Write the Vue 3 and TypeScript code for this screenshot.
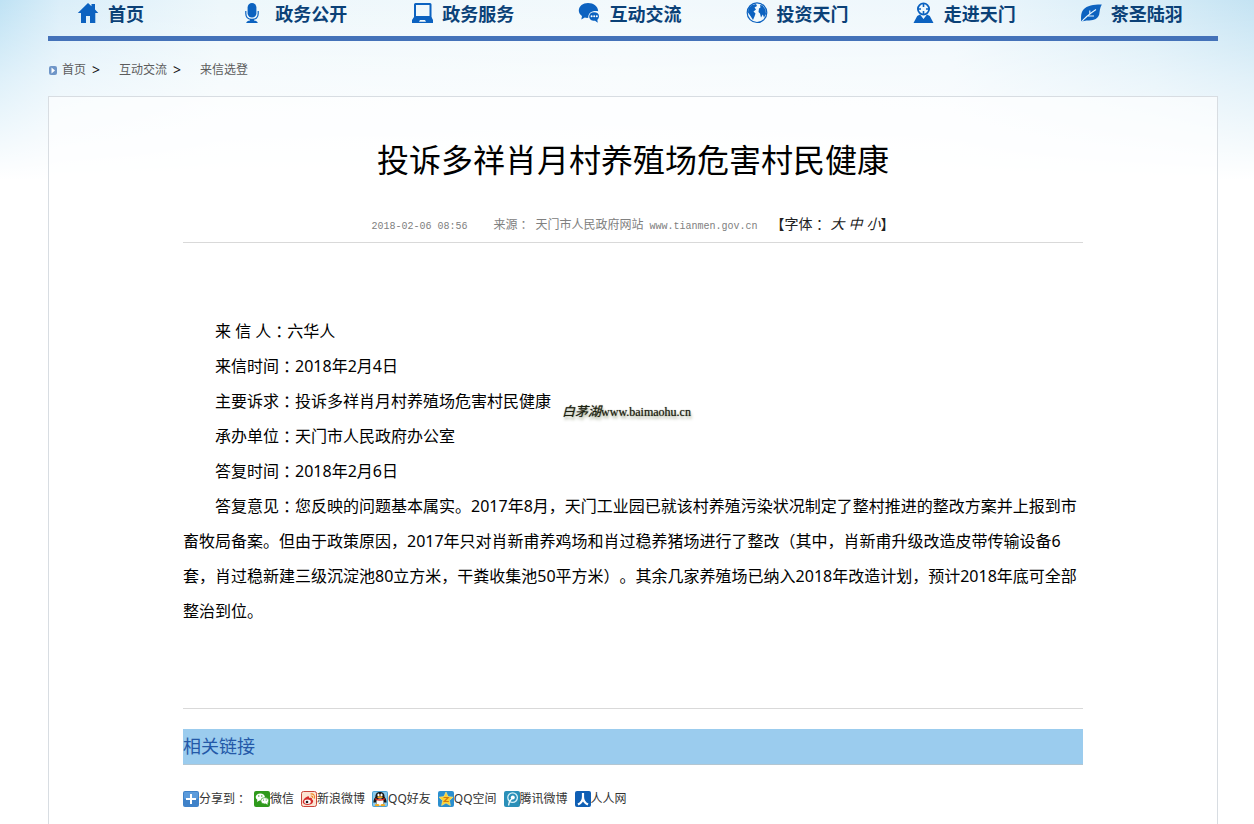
<script setup lang="ts">
interface NavItem {
  label: string
  icon: string
}

interface Field {
  label: string
  value: string
  stamp?: boolean
}

const navItems: NavItem[] = [
  { label: '首页', icon: 'home' },
  { label: '政务公开', icon: 'mic' },
  { label: '政务服务', icon: 'laptop' },
  { label: '互动交流', icon: 'chat' },
  { label: '投资天门', icon: 'globe' },
  { label: '走进天门', icon: 'place' },
  { label: '茶圣陆羽', icon: 'leaf' },
]

const fields: Field[] = [
  { label: '来 信 人', value: '六华人' },
  { label: '来信时间', value: '2018年2月4日' },
  { label: '主要诉求', value: '投诉多祥肖月村养殖场危害村民健康', stamp: true },
  { label: '承办单位', value: '天门市人民政府办公室' },
  { label: '答复时间', value: '2018年2月6日' },
  {
    label: '答复意见',
    value:
      '您反映的问题基本属实。2017年8月，天门工业园已就该村养殖污染状况制定了整村推进的整改方案并上报到市畜牧局备案。但由于政策原因，2017年只对肖新甫养鸡场和肖过稳养猪场进行了整改（其中，肖新甫升级改造皮带传输设备6套，肖过稳新建三级沉淀池80立方米，干粪收集池50平方米）。其余几家养殖场已纳入2018年改造计划，预计2018年底可全部整治到位。',
  },
]

const sizes: string[] = ['大', '中', '小']

const shares: NavItem[] = [
  { label: '微信', icon: 'wechat' },
  { label: '新浪微博', icon: 'weibo' },
  { label: 'QQ好友', icon: 'qq' },
  { label: 'QQ空间', icon: 'qzone' },
  { label: '腾讯微博', icon: 'tqq' },
  { label: '人人网', icon: 'renren' },
]
</script>

<template>
  <div class="page">
    <nav class="nav">
      <a v-for="item in navItems" :key="item.label" class="nav-item" href="#">
        <svg class="nav-icon" viewBox="0 0 24 24" aria-hidden="true">
          <g v-if="item.icon === 'home'">
            <path d="M12 1 L15.5 4.3 V2 H19 V7.6 L22.3 11 H19.3 V21 H14 V14 H10 V21 H5 V11 H1.8 Z" />
          </g>
          <g v-else-if="item.icon === 'mic'">
            <rect x="4.6" y="1" width="8.8" height="14.6" rx="4.4" />
            <path class="line thin" d="M2.8 9 V11.5 C2.8 15.6 5.2 17.4 9 17.4 S15.2 15.6 15.2 11.5 V9" />
            <path d="M7 17 H11 V18.6 C13 18.9 14.4 19.8 14.8 21 H3.2 C3.6 19.8 5 18.9 7 18.6 Z" />
          </g>
          <g v-else-if="item.icon === 'laptop'">
            <path fill-rule="evenodd" d="M5.5 1 H20 Q21.5 1 21.5 2.5 V15.5 H4 V2.5 Q4 1 5.5 1 Z M6 3 V14 H19.5 V3 Z" />
            <path fill-rule="evenodd" d="M4 15 H21.5 L23 18 V21 H2 V18 Z M10 18 L9 19.8 H16 L15 18 Z" />
          </g>
          <g v-else-if="item.icon === 'chat'">
            <path d="M11 1 C16.5 1 21 4.2 21.2 9.2 C15 8.2 11 11 11.3 15.8 C10 16 8.8 15.8 7.8 15.5 L4.3 17.5 L5 14 C2.8 12.8 1.8 10.8 1.8 8.6 C1.8 4 6 1 11 1 Z" />
            <path d="M17 10.2 C20 10.2 22 11.8 22 14.2 C22 15.8 21.3 17 20.3 17.8 L20.8 20.8 L18 18.8 C14.6 19 12.2 17.3 12.2 14.4 C12.2 11.8 14.3 10.2 17 10.2 Z" />
            <g fill="#fff"><circle cx="14.6" cy="14.2" r="1" /><circle cx="17.2" cy="14.2" r="1" /><circle cx="19.8" cy="14.2" r="1" /></g>
          </g>
          <g v-else-if="item.icon === 'globe'">
            <circle class="line thin" cx="12" cy="10.7" r="9.8" />
            <path d="M3.5 6 L7 3 L11 2 L12 4 L9.5 5.5 L11 7.5 L8.5 9.5 L10.5 11.5 L9.5 14.5 L8 18 L5.5 14 L3 10.5 Z" />
            <path d="M15 3 L17.5 3.5 L20.5 7.5 L21 12 L19 15.5 L17.8 12.5 L16 15.5 L15 11.5 L13.5 10 L14 6.5 L15.5 5.5 Z" />
          </g>
          <g v-else-if="item.icon === 'place'">
            <circle class="line" cx="11.5" cy="7" r="5.6" />
            <path d="M10.7 1 H12.3 V5 H10.7 Z M10.7 9 H12.3 V13 H10.7 Z M5.5 6.2 H9 V7.8 H5.5 Z M14 6.2 H17.5 V7.8 H14 Z" />
            <path d="M5.2 14 L8 12.4 L11.5 17 L15 12.4 L17.8 14 L21.5 21 H1.5 Z" />
          </g>
          <g v-else>
            <path d="M22.8 2.6 C16 2.4 8 3.6 4.5 7.5 C1.8 10.7 2 14.5 2.2 19.8 C5.5 18.8 5.6 18.6 8 18.4 C14.5 19 19 17 20.2 12.6 C20.8 9 20.8 6 22.8 2.6 Z" />
            <path class="vein" d="M2 20.5 C6 15.5 11 11.5 17 7.5 M9 14 H15 M10.8 12.2 V8.5" />
          </g>
        </svg>
        <span>{{ item.label }}</span>
      </a>
    </nav>

    <nav class="crumbs" aria-label="当前位置">
      <svg class="crumb-icon" viewBox="0 0 8 9" aria-hidden="true">
        <rect width="8" height="9" rx="2" fill="#6f96c8" />
        <path d="M2.5 1.5 L6 4.5 L2.5 7.5 Z" fill="#fff" />
      </svg>
      <a href="#">首页</a><span class="sep">&gt;</span>
      <a href="#">互动交流</a><span class="sep">&gt;</span>
      <a href="#">来信选登</a>
    </nav>

    <main class="panel">
      <h1>投诉多祥肖月村养殖场危害村民健康</h1>
      <div class="meta">
        <time class="mono">2018-02-06 08:56</time>
        <span class="source"><span>来源<span class="colon">：</span></span><span>天门市人民政府网站</span><span class="mono">www.tianmen.gov.cn</span></span>
        <span class="sizer">【字体<span class="colon">：</span><button v-for="s in sizes" :key="s" type="button">{{ s }}</button>】</span>
      </div>

      <article class="letter">
        <p v-for="f in fields" :key="f.label">
          {{ f.label }}<span class="colon">：</span>{{ f.value }}<span v-if="f.stamp" class="stamp"><i>白茅湖</i>www.baimaohu.cn</span>
        </p>
      </article>

      <h2>相关链接</h2>

      <div class="share">
        <a class="share-item" href="#">
          <svg viewBox="0 0 16 16" aria-hidden="true">
            <rect width="16" height="16" rx="2" fill="#3f82c9" />
            <rect x="1" y="1" width="14" height="7" rx="1" fill="#5c9bdb" />
            <path d="M7 3 H9 V7 H13 V9 H9 V13 H7 V9 H3 V7 H7 Z" fill="#fff" />
          </svg>
          <span>分享到<span class="colon">：</span></span>
        </a>
        <a v-for="s in shares" :key="s.label" class="share-item" href="#">
          <svg viewBox="0 0 16 16" aria-hidden="true">
            <g v-if="s.icon === 'wechat'">
              <rect width="16" height="16" rx="2" fill="#2f9a1c" />
              <ellipse cx="6.3" cy="6" rx="4.6" ry="3.6" fill="#fff" />
              <path d="M3.5 8 L3 11 L6 9 Z" fill="#fff" />
              <ellipse cx="10.8" cy="9.8" rx="4" ry="3.2" fill="#fff" stroke="#2f9a1c" stroke-width=".7" />
              <path d="M11.5 12 L13.5 14 L13.4 11.5 Z" fill="#fff" />
              <g fill="#2f9a1c"><circle cx="4.8" cy="5" r=".7" /><circle cx="7.8" cy="5" r=".7" /><circle cx="9.5" cy="9" r=".6" /><circle cx="12.2" cy="9" r=".6" /></g>
            </g>
            <g v-else-if="s.icon === 'weibo'">
              <rect x=".5" y=".5" width="15" height="15" rx="2" fill="#fbe3d2" stroke="#c9453a" />
              <path d="M6.5 5.5 C8 5 8.3 6 8 7 C10 6.2 11.5 7 10.8 8.3 C12.5 8.9 12.6 10.8 11.3 12.2 C9 14.5 3 14.6 1.8 11.5 C1.4 9.5 4 6.3 6.5 5.5 Z" fill="#d52b2a" />
              <ellipse cx="6.5" cy="10.8" rx="3.3" ry="2.2" fill="#fff" />
              <circle cx="6" cy="11" r="1.3" fill="#222" />
              <path d="M9.5 3 C12.5 2.4 14.4 4.8 13.3 7.6 M9.8 5 C11.3 4.8 12 5.8 11.6 7" fill="none" stroke="#f08a24" stroke-width="1.1" />
            </g>
            <g v-else-if="s.icon === 'qq'">
              <rect width="16" height="16" rx="2" fill="#4aa3d8" />
              <rect x="1" y="1" width="14" height="14" rx="1" fill="#8cc9ea" />
              <path d="M8 1 C11.5 1 12.6 3.2 12.6 6 C14.2 8 15 10.5 14.2 12 L12.8 11 C12 14 4 14 3.2 11 L1.8 12 C1 10.5 1.8 8 3.4 6 C3.4 3.2 4.5 1 8 1 Z" fill="#161616" />
              <ellipse cx="8" cy="11" rx="3.6" ry="3.4" fill="#fff" />
              <ellipse cx="6.5" cy="4" rx="1.1" ry="1.5" fill="#fff" /><ellipse cx="9.5" cy="4" rx="1.1" ry="1.5" fill="#fff" />
              <ellipse cx="8" cy="6.2" rx="2.8" ry=".9" fill="#f6a81c" />
              <path d="M3.4 7 C6 8.8 10 8.8 12.6 7 L12.8 8.6 C10 10.2 6 10.2 3.2 8.6 Z" fill="#dd2a22" />
              <ellipse cx="5.2" cy="14.2" rx="2.4" ry="1.1" fill="#f6a81c" /><ellipse cx="10.8" cy="14.2" rx="2.4" ry="1.1" fill="#f6a81c" />
            </g>
            <g v-else-if="s.icon === 'qzone'">
              <rect width="16" height="16" rx="2" fill="#2b8fcf" />
              <path d="M8 1 L10.1 5.6 L15 6.2 L11.4 9.6 L12.4 14.5 L8 12 L3.6 14.5 L4.6 9.6 L1 6.2 L5.9 5.6 Z" fill="#ffd22e" stroke="#ffe98a" stroke-width=".6" />
              <path d="M5.5 6.5 H10.2 L6.3 10.5 H10.8" fill="none" stroke="#d07a12" stroke-width="1.2" />
            </g>
            <g v-else-if="s.icon === 'tqq'">
              <rect width="16" height="16" rx="2" fill="#2a8fb8" />
              <circle cx="8.6" cy="6.6" r="4.8" fill="none" stroke="#d7f0f8" stroke-width="1.3" />
              <circle cx="8.8" cy="6.4" r="2" fill="#fff" />
              <path d="M8 7.5 C6 9 4.8 11.5 4.6 14.5" fill="none" stroke="#fff" stroke-width="1.4" />
            </g>
            <g v-else>
              <rect width="16" height="16" rx="2" fill="#0f5fb4" />
              <path d="M8 2 V6 C8 9.5 6.2 12 3 13.6 M8 6 C8 9.5 9.8 12 13 13.6" fill="none" stroke="#fff" stroke-width="2.2" />
            </g>
          </svg>
          <span>{{ s.label }}</span>
        </a>
      </div>
    </main>
  </div>
</template>

<style>
body {
  margin: 0;
  background: #fff;
}
</style>

<style scoped>
.page {
  box-sizing: border-box;
  min-height: 100vh;
  padding: 0 36px 0 48px;
  display: flex;
  flex-direction: column;
  font-family: "Noto Sans", "Noto Sans CJK SC", sans-serif;
  text-spacing-trim: space-all;
  color: #000;
  background:
    linear-gradient(to bottom, rgba(255, 255, 255, 0) 0, rgba(255, 255, 255, 0.5) 80px, #fff 180px),
    linear-gradient(to right, #bfe2f4 0, #daeef9 60px, #edf7fb 220px, #f2f9fc 50%, #eef7fc 76%, #d6ecf7 92%, #c4e3f3 100%);
}

a {
  color: inherit;
  text-decoration: none;
}

.colon {
  font-family: "Noto Sans CJK TC", sans-serif;
  line-height: 1;
  vertical-align: -1px;
}

.nav {
  display: grid;
  grid-template-columns: repeat(7, 1fr);
  padding-bottom: 8px;
  border-bottom: 5px solid #4472b9;
}

.nav-item {
  display: flex;
  align-items: center;
  gap: 8px;
  height: 28px;
  padding-left: 28px;
  font-size: 18px;
  font-weight: 700;
  line-height: 28px;
  color: #0b4177;
  white-space: nowrap;
}

.nav-icon {
  flex: none;
  width: 24px;
  height: 24px;
  fill: #0c62c0;
}

.line {
  fill: none;
  stroke: #0c62c0;
  stroke-width: 1.8;
}

.thin {
  stroke-width: 1.2;
}

.vein {
  fill: none;
  stroke: #e8f5fd;
  stroke-width: 1.1;
}

.crumbs {
  box-sizing: border-box;
  display: flex;
  align-items: center;
  height: 55px;
  padding-top: 3px;
  font-size: 12px;
  line-height: 18px;
  color: #5c5c5c;
}

.crumb-icon {
  width: 8px;
  height: 9px;
  margin: 0 5px 0 1px;
}

.sep {
  margin: 0 19px 0 6px;
  font-size: 14px;
  color: #111;
}

.panel {
  flex: 1;
  padding: 0 134px 16px;
  border: 1px solid #d8dde2;
  border-bottom: 0;
  background: rgba(255, 255, 255, 0.6);
}

h1 {
  margin: 39px 0 0;
  font-size: 32px;
  font-weight: 400;
  line-height: 48px;
  text-align: center;
}

.meta {
  box-sizing: border-box;
  display: flex;
  justify-content: center;
  align-items: baseline;
  height: 38px;
  margin-top: 21px;
  padding-top: 9px;
  border-bottom: 1px solid #d9d9d9;
  font-size: 12px;
  line-height: 20px;
  color: #808080;
  white-space: nowrap;
}

.mono {
  font-family: "Liberation Mono", monospace;
  font-size: 10px;
}

.source {
  display: flex;
  align-items: baseline;
  gap: 6px;
  margin: 0 13px 0 26px;
}

.sizer {
  font-size: 14px;
  color: #222;
}

.sizer button {
  padding: 0;
  margin-left: 4px;
  border: 0;
  background: none;
  font: inherit;
  font-style: italic;
  color: inherit;
}

.letter {
  padding: 71px 0 79px;
  border-bottom: 1px solid #d9d9d9;
}

.letter p {
  position: relative;
  margin: 0;
  font-size: 16px;
  line-height: 35px;
  text-indent: 32px;
}

.stamp {
  position: absolute;
  margin: 10px 0 0 11px;
  font-family: "Liberation Serif", "Noto Sans CJK SC", serif;
  font-size: 12px;
  line-height: 35px;
  text-indent: 0;
  color: #1c2010;
  white-space: nowrap;
  text-shadow: 0 0 1px #59604a, 1px 3px 3px #a9b09a;
}

.stamp i {
  font-size: 13px;
}

h2 {
  margin: 20px 0 0;
  font-size: 18px;
  font-weight: 400;
  line-height: 35px;
  color: #2459a8;
  background: #9bccee;
  border-bottom: 1px solid #b3c6d2;
}

.share {
  display: flex;
  flex-wrap: wrap;
  gap: 7px;
  margin-top: 25px;
}

.share-item {
  display: flex;
  align-items: center;
  font-size: 12px;
  line-height: 18px;
  color: #333;
  white-space: nowrap;
}

.share-item svg {
  width: 16px;
  height: 16px;
}
</style>
